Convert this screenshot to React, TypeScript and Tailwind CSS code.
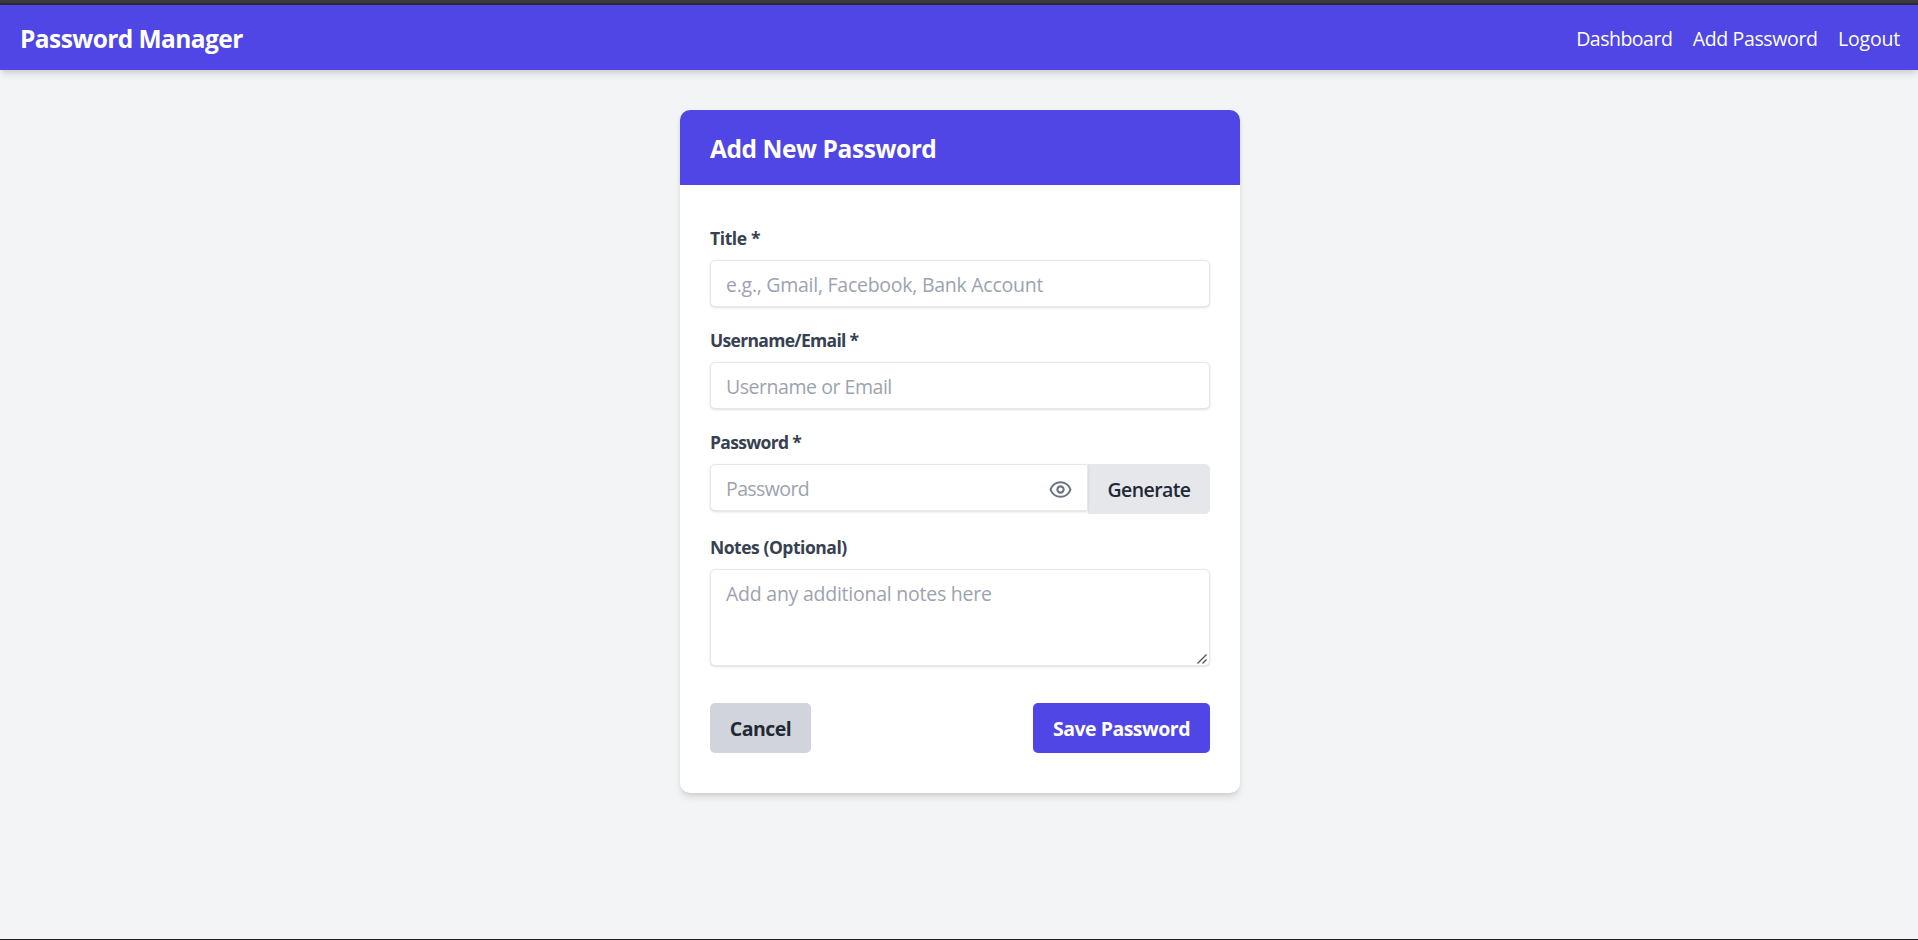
import { useState } from 'react';
import type { ReactNode } from 'react';

const inputClass =
  'block w-full rounded-[5px] border border-[#e5e7eb] bg-white px-[15px] text-[19.5px] text-[#374151] shadow-[0_1px_3px_0_rgba(0,0,0,0.1),0_1px_2px_-1px_rgba(0,0,0,0.1)] outline-none placeholder:text-[#9ca3af]';

function Label({ htmlFor, className, children }: { htmlFor: string; className: string; children: ReactNode }) {
  return (
    <label htmlFor={htmlFor} className={`mb-[9px] block w-max pt-px text-[17.5px] leading-[25px] font-bold whitespace-nowrap text-[#374151] ${className}`}>
      {children}
    </label>
  );
}

function EyeIcon() {
  return (
    <svg className="size-[25px]" fill="none" viewBox="0 0 24 24" stroke="currentColor" strokeWidth={2} strokeLinecap="round" strokeLinejoin="round">
      <path d="M15 12a3 3 0 11-6 0 3 3 0 016 0z" />
      <path d="M2.458 12C3.732 7.943 7.523 5 12 5c4.478 0 8.268 2.943 9.542 7-1.274 4.057-5.064 7-9.542 7-4.477 0-8.268-2.943-9.542-7z" />
    </svg>
  );
}

export default function App() {
  const [visible, setVisible] = useState(false);

  return (
    <div className="flex h-[940px] flex-col overflow-hidden border-b border-[#1c1b22] bg-[#f3f4f6] font-['Open_Sans',sans-serif]">
      <div className="h-[5px] shrink-0 border-b-2 border-[#2b2a2f] bg-[#3b3a3f]" />
      <nav className="flex h-[65px] shrink-0 items-center justify-between bg-[#4f46e5] pt-px pr-[18px] pl-5 text-white shadow-[0_5px_7px_-1px_rgba(0,0,0,0.12),0_2px_4px_-2px_rgba(0,0,0,0.1)]">
        <a href="#" className="text-[24.5px] leading-[35px] font-bold tracking-[-0.57px]">Password Manager</a>
        <div className="flex gap-[20.5px] pt-px text-[19.5px] leading-[30px]">
          <a href="#" className="tracking-[-0.5px]">Dashboard</a>
          <a href="#" className="tracking-[-0.37px]">Add Password</a>
          <a href="#" className="tracking-[-0.2px]">Logout</a>
        </div>
      </nav>

      <main className="mt-10 ml-[680px] h-[683px] w-[560px] shrink-0 rounded-[10px] bg-white shadow-[0_5px_7px_-1px_rgba(0,0,0,0.12),0_2px_4px_-2px_rgba(0,0,0,0.1)]">
        <header className="flex h-[75px] items-center rounded-t-[10px] bg-[#4f46e5] px-[30px] pt-px">
          <h1 className="text-[24.5px] leading-[35px] font-bold tracking-[-0.43px] text-white">Add New Password</h1>
        </header>

        <form className="px-[30px] pt-[40px]" onSubmit={(event) => event.preventDefault()}>
          <div className="mb-5">
            <Label htmlFor="title" className="tracking-[-0.4px]">Title *</Label>
            <input id="title" className={`h-[47px] pt-[2px] tracking-[-0.26px] ${inputClass}`} placeholder="e.g., Gmail, Facebook, Bank Account" />
          </div>
          <div className="mb-5">
            <Label htmlFor="username" className="tracking-[-0.68px]">Username/Email *</Label>
            <input id="username" className={`h-[47px] pt-[2px] tracking-[-0.46px] ${inputClass}`} placeholder="Username or Email" />
          </div>
          <div className="mb-5">
            <Label htmlFor="password" className="tracking-[-0.68px]">Password *</Label>
            <div className="flex h-[50px] items-start">
              <div className="relative w-[378px]">
                <input id="password" type={visible ? 'text' : 'password'} className={`h-[47px] rounded-r-none pt-[2px] tracking-[-0.6px] ${inputClass}`} placeholder="Password" />
                <button type="button" aria-label="Toggle password" onClick={() => setVisible(!visible)} className="absolute top-[13px] right-[15px] text-[#6b7280]">
                  <EyeIcon />
                </button>
              </div>
              <button type="button" className="h-[50px] w-[122px] rounded-r-[5px] bg-[#e5e7eb] pt-[2px] text-[19.5px] leading-[30px] font-semibold tracking-[-0.6px] text-[#1f2937]">Generate</button>
            </div>
          </div>
          <div className="mb-[37px]">
            <Label htmlFor="notes" className="tracking-[-0.47px]">Notes (Optional)</Label>
            <div className="relative">
              <textarea id="notes" className={`h-[97px] resize-y py-[9px] leading-[30px] tracking-[-0.24px] [&::-webkit-resizer]:hidden ${inputClass}`} placeholder="Add any additional notes here" />
              <svg className="pointer-events-none absolute right-[3px] bottom-[2px] size-[10px]" viewBox="0 0 10 10" fill="none" stroke="#555555" strokeWidth="1.4">
                <path d="M0.5 9.5L9.5 0.5M5.5 9.5L9.5 5.5" />
              </svg>
            </div>
          </div>
          <div className="flex justify-between">
            <button type="button" className="h-[50px] w-[101px] rounded-[5px] bg-[#d1d5db] pt-[2px] text-[19.5px] leading-[30px] font-bold tracking-[-0.5px] text-[#1f2937]">Cancel</button>
            <button type="submit" className="h-[50px] w-[177px] rounded-[5px] bg-[#4f46e5] pt-[2px] text-[19.5px] leading-[30px] font-bold tracking-[-0.5px] whitespace-nowrap text-white">Save Password</button>
          </div>
        </form>
      </main>
    </div>
  );
}
